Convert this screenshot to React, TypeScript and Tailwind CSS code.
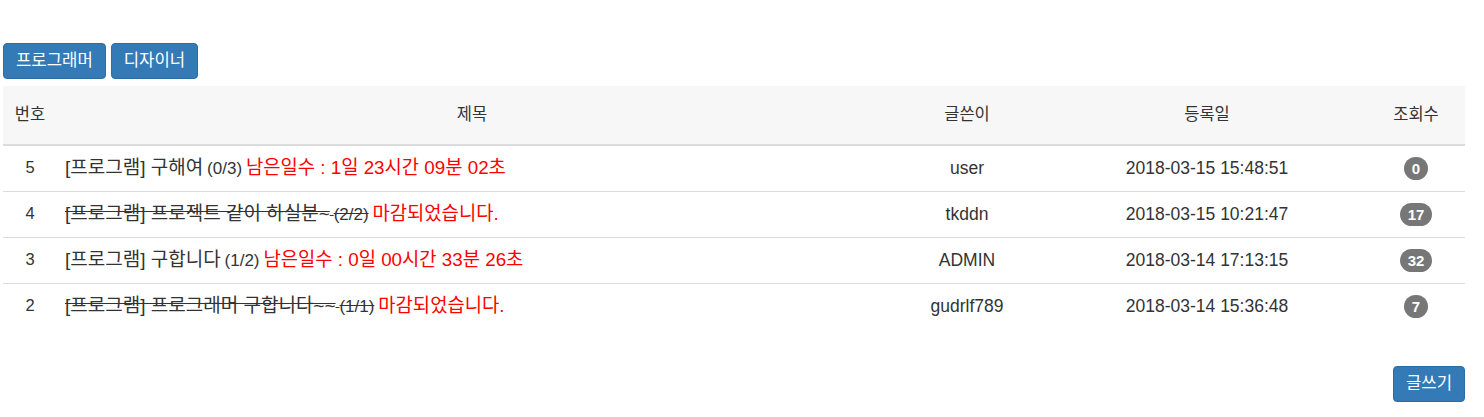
import React from 'react';

interface Post {
  no: number;
  title: string;
  count: string;
  closed: boolean;
  remain?: string;
  writer: string;
  date: string;
  views: number;
}

const posts: Post[] = [
  { no: 5, title: '[프로그램] 구해여', count: '(0/3)', closed: false, remain: '남은일수 : 1일 23시간 09분 02초', writer: 'user', date: '2018-03-15 15:48:51', views: 0 },
  { no: 4, title: '[프로그램] 프로젝트 같이 하실분~', count: '(2/2)', closed: true, writer: 'tkddn', date: '2018-03-15 10:21:47', views: 17 },
  { no: 3, title: '[프로그램] 구합니다', count: '(1/2)', closed: false, remain: '남은일수 : 0일 00시간 33분 26초', writer: 'ADMIN', date: '2018-03-14 17:13:15', views: 32 },
  { no: 2, title: '[프로그램] 프로그래머 구합니다~~', count: '(1/1)', closed: true, writer: 'gudrlf789', date: '2018-03-14 15:36:48', views: 7 },
];

const font = "font-['Liberation_Sans','Noto_Sans_CJK_KR',sans-serif]";

function Btn({ children }: { children: React.ReactNode }) {
  return (
    <button className="h-[36px] px-3 text-[16.7px] text-white bg-[#337ab7] border border-[#2e6da4] rounded">
      {children}
    </button>
  );
}

export default function App() {
  return (
    <div className={`${font} text-[#333] text-sm bg-white w-[1484px] h-[417px] px-[3px] pt-[43px]`}>
      <div className="flex gap-[5px]">
        <Btn>프로그래머</Btn>
        <Btn>디자이너</Btn>
      </div>

      <table className="mt-[7px] w-[1462px] border-collapse">
        <thead>
          <tr className="bg-[#f7f7f7] h-[59px] border-b-2 border-[#ddd] text-[16.5px]">
            <th className="w-[54px] font-normal">번호</th>
            <th className="w-[830px] font-normal">제목</th>
            <th className="w-[160px] font-normal">글쓴이</th>
            <th className="w-[320px] font-normal">등록일</th>
            <th className="font-normal">조회수</th>
          </tr>
        </thead>
        <tbody>
          {posts.map((p, i) => (
            <tr key={p.no} className={`h-[46px] ${i < posts.length - 1 ? 'border-b border-[#ddd]' : ''}`}>
              <td className="text-center text-[16.5px]">{p.no}</td>
              <td className="px-2 text-left">
                <span className={p.closed ? 'line-through' : ''}>
                  <span className="text-[19px]">{p.title}</span> <span className="text-[17px]">{p.count}</span>
                </span>{' '}
                <span className="text-[18.8px] text-[#ff0000]">{p.closed ? '마감되었습니다.' : p.remain}</span>
              </td>
              <td className="text-center text-[17.5px]">{p.writer}</td>
              <td className="text-center text-[17.5px]">{p.date}</td>
              <td className="text-center">
                <span className="inline-block min-w-[12px] px-[8px] py-[4px] text-[15px] font-bold leading-none text-white bg-[#777] rounded-[12px]">
                  {p.views}
                </span>
              </td>
            </tr>
          ))}
        </tbody>
      </table>

      <div className="flex justify-end mt-[37px] w-[1462px]">
        <Btn>글쓰기</Btn>
      </div>
    </div>
  );
}
